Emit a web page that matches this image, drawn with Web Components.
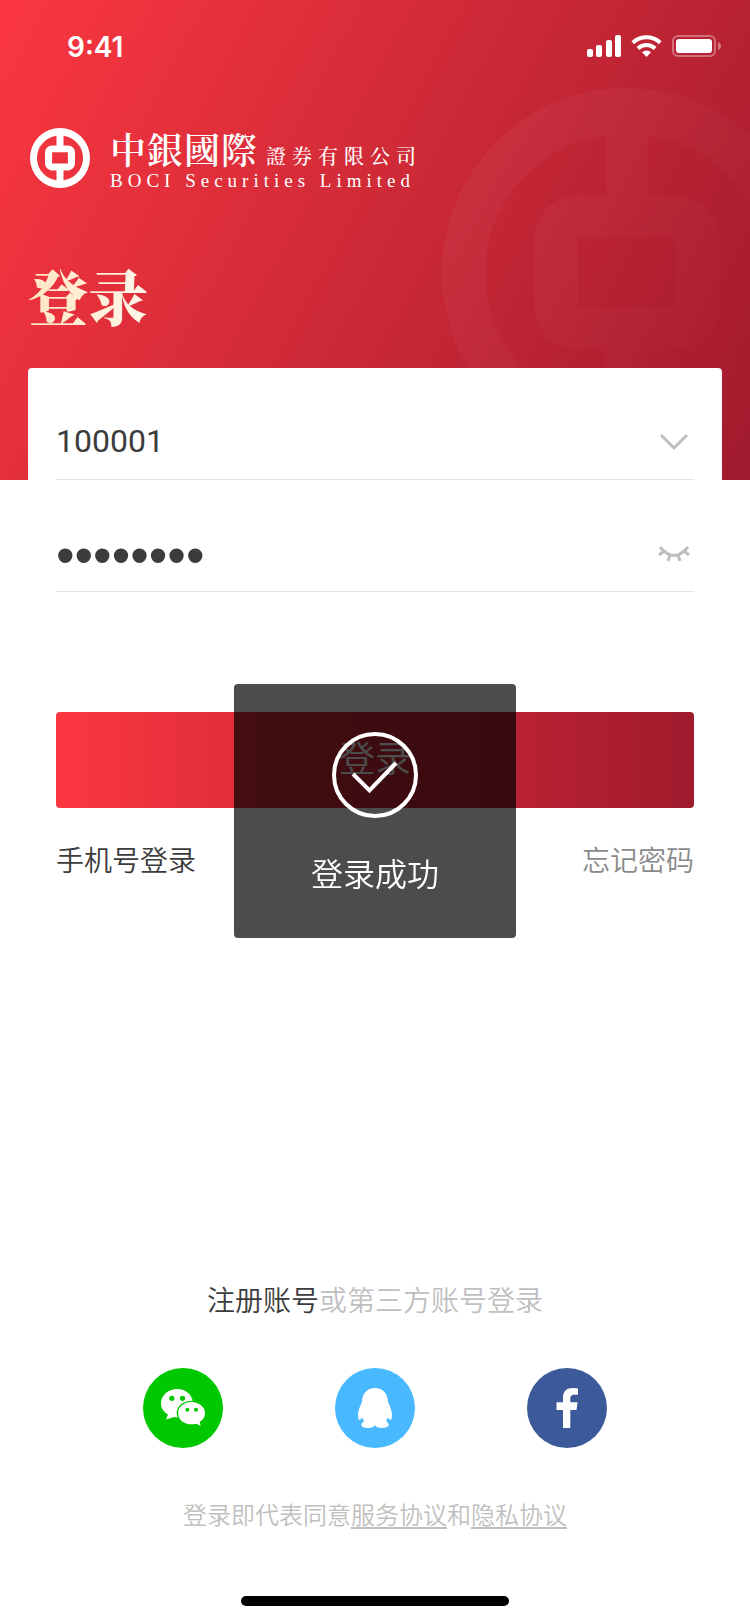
<!DOCTYPE html>
<html lang="zh-CN">
<head>
<meta charset="utf-8">
<meta name="viewport" content="width=device-width, initial-scale=1">
<title>登录</title>
<style>
  html, body { margin: 0; background: #fff; }
  body { font-family: Roboto, "Noto Sans CJK SC", sans-serif; font-weight: 350; color: #3c3c3c; }
</style>
</head>
<body>
<login-page></login-page>
<script>
const define = (name, html, setup) => {
  const template = document.createElement('template');
  template.innerHTML = html;
  customElements.define(name, class extends HTMLElement {
    constructor() {
      super();
      this.attachShadow({ mode: 'open' }).append(template.content.cloneNode(true));
    }
    connectedCallback() { if (setup) setup(this, this.shadowRoot); }
  });
};

define('status-bar', `
<style>
  :host { display: flex; justify-content: space-between; align-items: center; height: 92px; padding: 0 28px 0 67px; color: #fff; }
  time { font: 600 28px/36px Inter, sans-serif; padding-top: 2px; }
  svg { display: block; }
</style>
<time>9:41</time>
<svg width="136" height="24" viewBox="0 0 136 24" fill="#fff" aria-hidden="true">
  <rect x="1" y="15" width="6" height="8" rx="2"/><rect x="10" y="11" width="6" height="12" rx="2"/>
  <rect x="20" y="6" width="6" height="17" rx="2"/><rect x="29" y="1" width="6" height="22" rx="2"/>
  <path d="M60.500 23l-4.500-4.700a6.500 6.500 0 0 1 9 0z"/>
  <g fill="none" stroke="#fff" stroke-width="4">
    <path d="M46.800 8.800a20 20 0 0 1 27.400 0"/><path d="M51.900 14.500a12.500 12.500 0 0 1 17.200 0"/>
  </g>
  <rect x="87" y="2" width="42" height="20" rx="5" fill="none" stroke="#fff" stroke-opacity=".35" stroke-width="2"/>
  <rect x="90" y="5" width="36" height="14" rx="3"/>
  <path d="M132 8q3 1 3 4t-3 4z" fill-opacity=".4"/>
</svg>`);

define('boc-mark', `
<style>
  :host { display: block; }
  svg { display: block; width: 100%; height: 100%; }
</style>
<svg viewBox="0 0 60 60" aria-hidden="true">
  <defs><linearGradient id="g" x1="0" y1="0" x2="1" y2=".7">
    <stop stop-color="#fff" style="stop-opacity:var(--mark-from,1)"/>
    <stop offset="1" stop-color="#fff" style="stop-opacity:var(--mark-to,1)"/>
  </linearGradient></defs>
  <path fill="url(#g)" fill-rule="evenodd" d="M30 0a30 30 0 1 1 0 60a30 30 0 1 1 0-60z
    M26.500 7.700A22.500 22.500 0 0 0 26.500 52.300V42.400H22A7 7 0 0 1 15 35.400V24.400A7 7 0 0 1 22 17.400H26.500z
    M33.500 7.700A22.500 22.500 0 0 1 33.500 52.300V42.400H38A7 7 0 0 0 45 35.400V24.400A7 7 0 0 0 38 17.400H33.500z
    M22.100 24.300h15.800v11.200h-15.800z"/>
</svg>`);

define('brand-logo', `
<style>
  :host { display: flex; align-items: center; gap: 20px; color: #fff; height: 64px; }
  boc-mark { width: 60px; height: 60px; flex: none; }
  .cn { display: flex; align-items: baseline; gap: 8px; height: 36px; padding-top: 6px; line-height: 36px; font-family: "Noto Serif CJK TC", "Noto Sans CJK TC", serif; font-weight: 600; white-space: nowrap; }
  .big { font-size: 36px; letter-spacing: 1px; }
  .small { font-size: 20px; letter-spacing: 6px; font-weight: 500; }
  .en { font: 400 19px/20px "Liberation Serif", serif; letter-spacing: 5px; white-space: nowrap; margin-top: 4px; }
</style>
<boc-mark></boc-mark>
<div>
  <div class="cn"><span class="big">中銀國際</span><span class="small">證券有限公司</span></div>
  <div class="en">BOCI Securities Limited</div>
</div>`);

define('page-hero', `
<style>
  :host { display: block; position: relative; overflow: hidden; height: 480px; background: linear-gradient(118deg, #fb3740, #d22b38 45%, #a01a2d); }
  .mark { position: absolute; right: -62px; top: 88px; width: 370px; height: 370px; --mark-from: .05; --mark-to: 0; }
  .content { position: relative; }
  brand-logo { margin: 34px 30px 0; }
  h1 { width: max-content; margin: 65px 28px 0; font: 900 60px/80px "Noto Serif CJK SC", "Noto Sans CJK SC", serif; color: transparent; background: linear-gradient(90deg, #ffe6c3, #fff5e8); -webkit-background-clip: text; background-clip: text; }
</style>
<boc-mark class="mark"></boc-mark>
<div class="content"><status-bar></status-bar><brand-logo></brand-logo><h1><slot></slot></h1></div>`);

define('form-field', `
<style>
  :host { display: block; box-sizing: border-box; height: 112px; padding-top: 36px; border-bottom: 1px solid #e5e5e5; }
  .row { display: flex; align-items: center; height: 74px; }
  input { flex: 1; min-width: 0; height: 40px; margin: 0; padding: 0; border: 0; outline: 0; background: none; color: #3c3c3c; font: 400 32px/40px Roboto, sans-serif; }
  input[type=password] { height: 64px; padding-top: 4px; font: 400 53px/60px "Liberation Sans", sans-serif; }
  button { width: 40px; height: 40px; padding: 0; border: 0; background: none; }
  svg { display: block; fill: none; stroke: #bfbfbf; stroke-width: 3; }
</style>
<div class="row"><input><button type="button"><svg width="40" height="40" viewBox="0 0 40 40" aria-hidden="true"><path/></svg></button></div>`,
(host, root) => {
  const input = root.querySelector('input');
  input.type = host.getAttribute('type');
  input.value = host.getAttribute('value');
  input.setAttribute('aria-label', host.getAttribute('label'));
  root.querySelector('button').setAttribute('aria-label', host.getAttribute('action'));
  root.querySelector('path').setAttribute('d', input.type === 'password'
    ? 'M6 14Q20 31 34 14M10 18l-5 4M30 18l5 4M16 22l-2 6M24 22l2 6'
    : 'M7 14L20 27L33 14');
});

define('login-form', `
<style>
  :host { display: block; position: relative; margin: -112px 28px 0; padding: 0 28px; background: #fff; border-radius: 4px; }
  .submit { display: block; width: 100%; height: 96px; margin: 120px 0 34px; padding: 0; border: 0; border-radius: 4px; color: #fff; background: linear-gradient(90deg, #fb3740, #a01a2d); font: inherit; font-size: 36px; line-height: 48px; }
  nav { display: flex; justify-content: space-between; font-size: 28px; line-height: 40px; }
  a { color: #3c3c3c; text-decoration: none; }
  a.quiet { color: #8a8a8a; }
</style>
<form>
  <form-field type="text" label="账号" action="选择账号" value="100001"></form-field>
  <form-field type="password" label="密码" action="显示密码" value="password"></form-field>
  <button class="submit" type="button">登录</button>
</form>
<nav><a href="#phone">手机号登录</a><a class="quiet" href="#forgot">忘记密码</a></nav>`);

define('social-login', `
<style>
  :host { display: block; text-align: center; }
  p { margin: 0; font-size: 28px; line-height: 40px; color: #bfbfbf; }
  p a { color: #3c3c3c; text-decoration: none; }
  div { display: flex; justify-content: center; gap: 112px; margin-top: 46px; }
  button { width: 80px; height: 80px; padding: 0; border: 0; border-radius: 50%; background: none; }
  svg { display: block; }
</style>
<p><a href="#register">注册账号</a>或第三方账号登录</p>
<div>
  <button type="button" aria-label="微信"><svg width="80" height="80" viewBox="0 0 80 80">
    <circle cx="40" cy="40" r="40" fill="#00c800"/>
    <path fill="#fff" d="M34 21c9 0 15.500 6 16 14L42 49q-5 1-11 0L23 51.500L25 46.500C20.500 44 18 40 18 35.500C18 27.500 25 21 34 21z"/>
    <ellipse cx="48.500" cy="45.200" rx="14.800" ry="12.500" fill="#00c800"/>
    <path fill="#fff" d="M48.500 34C56 34 62 39 62 45c0 4-2 7-5.500 9l1.300 4-4.500-2.300Q51 56.300 48.500 56.300C41 56.300 35 51.500 35 45.200S41 34 48.500 34z"/>
    <g fill="#00c800"><circle cx="28.800" cy="30.300" r="2.600"/><circle cx="39.500" cy="30.300" r="2.600"/><circle cx="44.400" cy="41.800" r="2"/><circle cx="53" cy="41.800" r="2"/></g>
  </svg></button>
  <button type="button" aria-label="QQ"><svg width="80" height="80" viewBox="0 0 80 80">
    <circle cx="40" cy="40" r="40" fill="#48b8ff"/>
    <path fill="#fff" d="M40 20C48 20 53 26 53 34Q57 42 57 47Q57 51 56 52Q54.500 52 53.500 50Q52 50 51.500 52Q51 54 52.500 54.500C55.500 57 53 60 47 60Q42 60 40 57.500Q38 60 33 60C27 60 24.500 57 27.500 54.500Q29.500 54 28.500 52Q28 50 26.500 50Q25.500 52 24 52Q23 51 23 47Q23 42 27 34C27 26 32 20 40 20z"/>
  </svg></button>
  <button type="button" aria-label="Facebook"><svg width="80" height="80" viewBox="0 0 80 80">
    <circle cx="40" cy="40" r="40" fill="#3c5a99"/>
    <path fill="#fff" d="M36 60V42H29.500V34.300H36V30C36 23 39.500 20 46 20Q49 20 51 20.400V26.700H47.500C44 26.700 43.300 28.500 43.300 31V34.300H50.500L49.500 42H43.300V60z"/>
  </svg></button>
</div>`);

define('legal-note', `
<style>
  :host { display: block; text-align: center; font-size: 24px; line-height: 36px; color: #bfbfbf; }
  a { color: inherit; text-decoration: underline; text-decoration-thickness: 2px; text-underline-offset: 3px; text-decoration-skip-ink: none; }
</style>登录即代表同意<a href="#terms">服务协议</a>和<a href="#privacy">隐私协议</a>`);

define('success-toast', `
<style>
  :host { position: fixed; inset: 0 0 2px; margin: auto; box-sizing: border-box; width: 282px; height: 254px; padding-top: 48px; border-radius: 4px; background: rgba(0, 0, 0, .7); color: #fff; text-align: center; font-size: 32px; line-height: 48px; }
  svg { display: block; margin: 0 auto 33px; fill: none; stroke: #fff; stroke-width: 4; }
</style>
<svg width="86" height="86" viewBox="0 0 86 86" aria-hidden="true"><circle cx="43" cy="43" r="41"/><path d="M21 42L37.500 58.500L64 31"/></svg>
<slot></slot>`);

define('login-page', `
<style>
  :host { display: flex; flex-direction: column; min-height: 100vh; }
  main { flex: 1; }
  legal-note { margin: 50px 0 62px; }
  .home { width: 268px; height: 10px; margin: 0 auto 18px; border-radius: 5px; background: #000; }
</style>
<page-hero>登录</page-hero>
<main><login-form></login-form></main>
<social-login></social-login>
<legal-note></legal-note>
<div class="home"></div>
<success-toast role="status">登录成功</success-toast>`);
</script>
</body>
</html>
